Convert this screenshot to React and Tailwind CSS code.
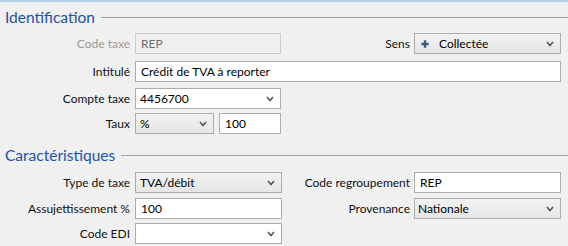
const font = { fontFamily: 'Lato, "Noto Sans", sans-serif' };

const Chevron = () => (
  <svg width="8" height="6" viewBox="0 0 8 6" className="shrink-0">
    <path d="M1 1 L4 4.5 L7 1" fill="none" stroke="#555" strokeWidth="1.6" />
  </svg>
);

const Plus = () => (
  <svg width="8" height="8" viewBox="0 0 8 8" className="shrink-0">
    <path d="M2.8 0.3h2.4v2.5h2.5v2.4h-2.5v2.5h-2.4v-2.5h-2.5v-2.4h2.5z" fill="#3e6074" />
  </svg>
);

const Heading = ({ children, className = '' }) => (
  <div className={`flex items-center h-[30px] pl-[5px] ${className}`}>
    <span className="text-[15.5px] leading-none text-[#1d52a6] pt-[2px]">{children}</span>
    <div className="flex-1 h-px bg-[#a0a0a0] ml-[6px]" />
  </div>
);

const Label = ({ children, disabled, className = 'w-[130px]' }) => (
  <div className={`text-right text-[12px] leading-none ${disabled ? 'text-[#9a9a9a]' : 'text-[#111]'} ${className}`}>
    {children}
  </div>
);

const Input = ({ value, disabled, className = '' }) => (
  <div
    className={`h-full flex items-center px-[5px] text-[12px] leading-none border ${
      disabled ? 'bg-[#f0f0f0] border-[#cccccc] text-[#6d6d6d]' : 'bg-white border-[#acacac] text-black'
    } ${className}`}
  >
    {value}
  </div>
);

const Select = ({ value, white, icon, className = '', pad = 'pl-[4px]' }) => (
  <div
    className={`h-full flex items-center ${pad} pr-[6px] text-[12px] leading-none border border-[#acacac] text-black ${
      white ? 'bg-white' : 'bg-gradient-to-b from-[#f2f2f2] to-[#e6e6e6]'
    } ${className}`}
  >
    {icon}
    <span className="flex-1">{value}</span>
    <Chevron />
  </div>
);

export default function App() {
  return (
    <div className="w-[568px] h-[246px] bg-[#f0f0f0] border-t-2 border-[#b8d1ea] overflow-hidden" style={font}>
      <Heading>Identification</Heading>

      <div className="flex items-center h-[21px] mt-[1px]">
        <Label disabled>Code taxe</Label>
        <Input value="REP" disabled className="ml-[5px] w-[146px]" />
        <Label className="flex-1">Sens</Label>
        <Select
          value="Collectée"
          icon={<span className="mr-[10px] ml-[2px] flex"><Plus /></span>}
          className="ml-[4px] w-[147px]"
        />
        <div className="w-[7px]" />
      </div>

      <div className="flex items-center h-[21px] mt-[7px]">
        <Label>Intitulé</Label>
        <Input value="Crédit de TVA à reporter" className="ml-[5px] w-[426px]" />
      </div>

      <div className="flex items-center h-[21px] mt-[6px]">
        <Label>Compte taxe</Label>
        <Select value="4456700" white className="ml-[5px] w-[146px]" />
      </div>

      <div className="flex items-center h-[21px] mt-[4px]">
        <Label>Taux</Label>
        <Select value="%" className="ml-[5px] w-[79px]" />
        <Input value="100" className="ml-[5px] w-[62px]" />
      </div>

      <Heading className="mt-[6px]">Caractéristiques</Heading>

      <div className="flex items-center h-[21px] mt-[2px]">
        <Label>Type de taxe</Label>
        <Select value="TVA/débit" className="ml-[5px] w-[147px]" />
        <Label className="flex-1">Code regroupement</Label>
        <Input value="REP" className="ml-[4px] w-[147px]" />
        <div className="w-[7px]" />
      </div>

      <div className="flex items-center h-[21px] mt-[5px]">
        <Label>Assujettissement %</Label>
        <Input value="100" className="ml-[5px] w-[147px]" />
        <Label className="flex-1">Provenance</Label>
        <Select value="Nationale" pad="pl-[3px]" className="ml-[4px] w-[147px]" />
        <div className="w-[7px]" />
      </div>

      <div className="flex items-center h-[21px] mt-[4px]">
        <Label>Code EDI</Label>
        <Select value="" white className="ml-[5px] w-[147px]" />
      </div>
    </div>
  );
}
